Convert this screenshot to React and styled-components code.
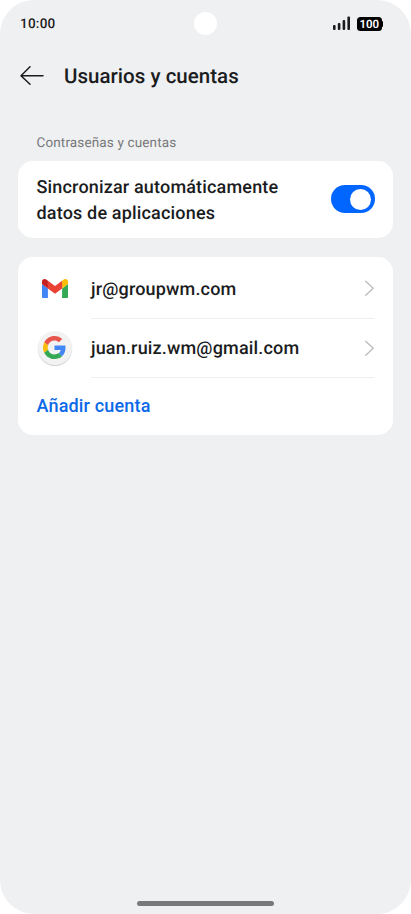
import React from 'react';
import styled, { createGlobalStyle } from 'styled-components';

const GlobalStyle = createGlobalStyle`
  *, *::before, *::after { box-sizing: border-box; }
  body {
    margin: 0;
    background: #fff;
    font-family: Roboto, "Liberation Sans", sans-serif;
    text-rendering: geometricPrecision;
  }
  svg { display: block; flex: none; }
`;

const Screen = styled.div`
  display: flex;
  flex-direction: column;
  width: 411px;
  height: 914px;
  overflow: hidden;
  background: #eff0f2;
  border-radius: 34px;
`;

const StatusBar = styled.header`
  display: grid;
  grid-template-columns: 1fr auto 1fr;
  align-items: center;
  height: 47px;
  padding: 0 28px 0 20px;
`;

const Clock = styled.time`
  font-size: 13.5px;
  font-weight: 500;
  letter-spacing: 0.25px;
  line-height: 16px;
  color: #1b1c1e;
`;

const Camera = styled.span`
  width: 23px;
  height: 23px;
  margin-left: 8px;
  border-radius: 50%;
  background: #fff;
`;

const StatusIcons = styled.div`
  display: flex;
  justify-content: flex-end;
  align-items: center;
  gap: 6px;
`;

const Battery = styled.span`
  display: flex;
  align-items: center;
  padding-top: 1px;
`;

const BatteryBody = styled.span`
  width: 24.5px;
  height: 13.5px;
  border-radius: 3.5px;
  background: #000;
  color: #fff;
  font-size: 11.5px;
  font-weight: 600;
  line-height: 14px;
  text-align: center;
`;

const BatteryTip = styled.span`
  width: 1.5px;
  height: 6px;
  border-radius: 0 2px 2px 0;
  background: #000;
`;

const TitleBar = styled.div`
  display: flex;
  align-items: center;
  gap: 20px;
  height: 58px;
  padding-left: 20px;
`;

const BackButton = styled.button`
  padding: 0;
  border: 0;
  background: none;
`;

const Title = styled.h1`
  margin: 0;
  padding-top: 2px;
  font-size: 20.5px;
  font-weight: 480;
  letter-spacing: 0.03px;
  line-height: 24px;
  color: #1b1c1e;
`;

const Content = styled.main`
  flex: 1;
  padding: 30px 18px 0;
`;

const SectionLabel = styled.h2`
  margin: 0 0 9.5px 18.5px;
  height: 16px;
  font-size: 13.5px;
  font-weight: 450;
  letter-spacing: 0.14px;
  line-height: 16px;
  color: #77787a;
`;

const Card = styled.section`
  width: 374.5px;
  margin-bottom: 18.5px;
  padding: 0 18.5px;
  border-radius: 15px;
  background: #fff;
`;

const SyncRow = styled.label`
  display: flex;
  align-items: center;
  justify-content: space-between;
  height: 77.5px;
`;

const SyncText = styled.span`
  width: 260px;
  padding-top: 2.5px;
  font-size: 18px;
  font-weight: 480;
  letter-spacing: 0.17px;
  line-height: 25.5px;
  color: #1b1c1e;
`;

const Toggle = styled.span`
  display: flex;
  align-items: center;
  justify-content: flex-end;
  width: 44px;
  height: 28px;
  margin-right: -0.5px;
  padding: 3.5px;
  border-radius: 14px;
  background: #0066ff;
`;

const Thumb = styled.span`
  width: 21px;
  height: 21px;
  border-radius: 50%;
  background: #fff;
`;

const AccountRow = styled.div`
  display: flex;
  align-items: stretch;
  height: ${({ $height }) => $height}px;
`;

const AccountIcon = styled.span`
  display: flex;
  align-items: center;
  justify-content: center;
  width: 36px;
  margin-right: 18px;
  padding-top: ${({ $drop }) => $drop}px;
`;

const AccountDetails = styled.div`
  flex: 1;
  display: flex;
  align-items: center;
  justify-content: space-between;
  padding-top: ${({ $drop }) => $drop}px;
  border-bottom: 1px solid #efeff0;
`;

const AccountName = styled.span`
  padding: 2.5px 0 0 0.5px;
  font-size: 18px;
  font-weight: 480;
  letter-spacing: 0.17px;
  line-height: 24px;
  color: #1b1c1e;
`;

const GoogleBadge = styled.span`
  display: flex;
  align-items: center;
  justify-content: center;
  width: 34px;
  height: 34px;
  margin-bottom: 2px;
  border-radius: 50%;
  background: #f2f2f2;
  box-shadow: 0 1px 1px #cfcfcf;
`;

const AddAccount = styled.button`
  display: flex;
  align-items: center;
  width: 100%;
  height: 57px;
  padding: 0 0 1px;
  border: 0;
  background: none;
  font: 480 18px/24px Roboto, "Liberation Sans", sans-serif;
  letter-spacing: 0.17px;
  color: #0b69e9;
`;

const HomeArea = styled.footer`
  display: flex;
  justify-content: center;
  height: 13px;
`;

const HomeIndicator = styled.span`
  width: 137px;
  height: 5px;
  border-radius: 3px;
  background: #77797b;
`;

const BackArrow = () => (
  <svg width="24" height="20" viewBox="0 0 24 20" fill="none" stroke="#1b1c1e" strokeWidth="1.5" strokeLinecap="round" strokeLinejoin="round">
    <path d="M10 0.8 L1 9.7 L10 18.3 M1 9.7 H23" />
  </svg>
);

const Signal = () => (
  <svg width="18" height="15" viewBox="0 0 18 15" fill="#1b1c1e">
    <rect x="0" y="9" width="2.6" height="5" rx="1" />
    <rect x="4.8" y="7" width="2.6" height="7" rx="1" />
    <rect x="9.6" y="4" width="2.6" height="10" rx="1" />
    <rect x="14.4" y="0.5" width="2.6" height="13.5" rx="1" />
  </svg>
);

const Chevron = () => (
  <svg width="10" height="17" viewBox="0 0 10 17" fill="none" stroke="#bdbdbe" strokeWidth="1.4" strokeLinecap="round" strokeLinejoin="round">
    <path d="M1.7 1.2 L9.2 8.2 L1.7 15.2" />
  </svg>
);

const GmailLogo = () => (
  <svg width="26" height="19.5" viewBox="52 42 88 66">
    <path fill="#4285f4" d="M58 108h14V74L52 59v43c0 3.32 2.69 6 6 6" />
    <path fill="#34a853" d="M120 108h14c3.32 0 6-2.69 6-6V59l-20 15" />
    <path fill="#fbbc04" d="M120 48v26l20-15v-8c0-7.42-8.47-11.65-14.4-7.2" />
    <path fill="#ea4335" d="M72 74V48l24 18 24-18v26L96 92" />
    <path fill="#c5221f" d="M52 51v8l20 15V48l-5.6-4.2c-5.94-4.45-14.4-.22-14.4 7.2" />
  </svg>
);

const GoogleLogo = () => (
  <svg width="23" height="23" viewBox="0 0 48 48">
    <path fill="#e6544a" d="M24 9.5c3.54 0 6.71 1.22 9.21 3.6l6.85-6.85C35.9 2.38 30.47 0 24 0 14.62 0 6.51 5.38 2.56 13.22l7.98 6.19C12.43 13.72 17.74 9.5 24 9.5z" />
    <path fill="#4285f4" d="M46.98 24.55c0-1.57-.15-3.09-.38-4.55H24v9.02h12.94c-.58 2.96-2.26 5.48-4.78 7.18l7.73 6c4.51-4.18 7.09-10.36 7.09-17.65z" />
    <path fill="#fbbc05" d="M10.53 28.59c-.48-1.45-.76-2.99-.76-4.59s.27-3.14.76-4.59l-7.98-6.19C.92 16.46 0 20.12 0 24c0 3.88.92 7.54 2.56 10.78l7.97-6.19z" />
    <path fill="#34a853" d="M24 48c6.48 0 11.93-2.13 15.89-5.81l-7.73-6c-2.15 1.45-4.92 2.3-8.16 2.3-6.26 0-11.57-4.22-13.47-9.91l-7.98 6.19C6.51 42.62 14.62 48 24 48z" />
  </svg>
);

export default function App() {
  return (
    <>
      <GlobalStyle />
      <Screen>
        <StatusBar>
          <Clock>10:00</Clock>
          <Camera />
          <StatusIcons>
            <Signal />
            <Battery>
              <BatteryBody>100</BatteryBody>
              <BatteryTip />
            </Battery>
          </StatusIcons>
        </StatusBar>
        <TitleBar>
          <BackButton aria-label="Atrás"><BackArrow /></BackButton>
          <Title>Usuarios y cuentas</Title>
        </TitleBar>
        <Content>
          <SectionLabel>Contraseñas y cuentas</SectionLabel>
          <Card>
            <SyncRow>
              <SyncText>Sincronizar automáticamente datos de aplicaciones</SyncText>
              <Toggle role="switch" aria-checked="true"><Thumb /></Toggle>
            </SyncRow>
          </Card>
          <Card>
            <AccountRow $height={62.5}>
              <AccountIcon $drop={1}><GmailLogo /></AccountIcon>
              <AccountDetails $drop={2}>
                <AccountName>jr@groupwm.com</AccountName>
                <Chevron />
              </AccountDetails>
            </AccountRow>
            <AccountRow $height={59}>
              <AccountIcon $drop={0}><GoogleBadge><GoogleLogo /></GoogleBadge></AccountIcon>
              <AccountDetails $drop={0}>
                <AccountName>juan.ruiz.wm@gmail.com</AccountName>
                <Chevron />
              </AccountDetails>
            </AccountRow>
            <AddAccount>Añadir cuenta</AddAccount>
          </Card>
        </Content>
        <HomeArea><HomeIndicator /></HomeArea>
      </Screen>
    </>
  );
}
